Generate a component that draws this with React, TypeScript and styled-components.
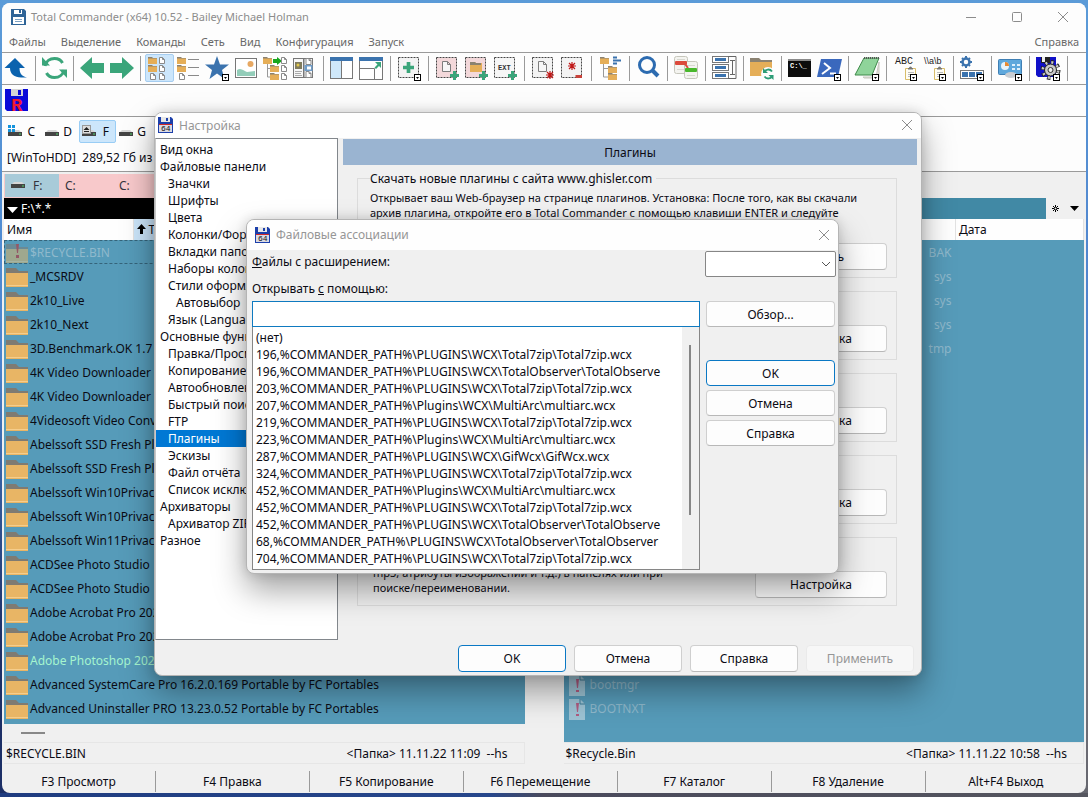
import React from "react";
import styled, { createGlobalStyle, css } from "styled-components";

const GlobalStyle = createGlobalStyle`
  * { box-sizing: border-box; }
  html, body { margin: 0; }
  body, button, input, select, table {
    font-family: "Noto Sans", "Open Sans", sans-serif;
    font-size: 12px;
    color: #0b0b14;
  }
  button { cursor: default; }
`;

/* ---------- window ---------- */

const Desktop = styled.div`
  min-height: 100vh;
  display: flex;
  padding: 3px 2px 4px;
  overflow: hidden;
  background:
    linear-gradient(90deg, #1f3c80, #27478c 45%, #4a4a5c 50%, #55565f) bottom / 100% 4px no-repeat,
    linear-gradient(180deg, #5b9bd8, #4a84cf 45%, #1c2f66 80%) left / 50% 100% no-repeat,
    linear-gradient(180deg, #5b9bd8, #4a78c8 54%, #8a8590 60%, #65666e) right / 50% 100% no-repeat;
`;

const Frame = styled.main`
  position: relative;
  flex: 1;
  min-width: 0;
  display: flex;
  flex-direction: column;
  background: #f0f0f0;
  border-radius: 8px;
`;

const TitleBar = styled.header`
  height: 27px;
  display: flex;
  align-items: center;
  padding-left: 9px;
  gap: 5px;
  background: #fdfdfd;
  border-radius: 8px 8px 0 0;
  color: #8c8c8c;
`;

const Title = styled.h1`
  flex: 1;
  margin: 0;
  font-size: 11px;
  font-weight: 400;
`;

const Caption = styled.div`
  display: flex;
`;

const CaptionButton = styled.button`
  width: 46px;
  height: 27px;
  padding: 0;
  border: 0;
  background: none;
  display: grid;
  place-items: center;
`;

const MenuBar = styled.nav`
  height: 22px;
  display: flex;
  align-items: center;
  gap: 15px;
  padding: 0 7px;
  background: #fdfdfd;
`;

const MenuItem = styled.button<{ $end?: boolean }>`
  padding: 0;
  border: 0;
  background: none;
  color: #686868;
  font-size: 11px;
  ${(p) => p.$end && css`margin-left: auto;`}
`;

const ToolBar = styled.div`
  height: 32px;
  display: flex;
  align-items: flex-start;
  padding-top: 1px;
  background: #fdfdfd;
  border-top: 1px solid #9a9a9a;
`;

const ToolButton = styled.button<{ $active?: boolean }>`
  flex: 0 0 29px;
  height: 28px;
  padding: 0;
  display: grid;
  place-items: center;
  border: 1px solid ${(p) => (p.$active ? "#a6cdf0" : "transparent")};
  border-radius: 2px;
  background: ${(p) => (p.$active ? "#cce6fb" : "none")};
  svg { overflow: visible; }
`;

const Separator = styled.span`
  flex: 0 0 1px;
  height: 25px;
  margin: 2px 4px 0;
  background: #9a9a9a;
`;

const DriveBar = styled.div`
  display: flex;
  height: 28px;
  padding: 3px 3px 0;
  background: #fdfdfd;
  border-top: 1px solid #9a9a9a;
`;

const DriveButton = styled.button<{ $active?: boolean }>`
  width: 37px;
  height: 23px;
  padding: 0 6px 0 2px;
  display: flex;
  align-items: center;
  justify-content: space-between;
  border: 1px solid ${(p) => (p.$active ? "#99cdf5" : "transparent")};
  border-radius: 2px;
  background: ${(p) => (p.$active ? "#cce6fb" : "none")};
`;

const DriveInfo = styled.div`
  height: 28px;
  padding: 0 5px;
  line-height: 27px;
  white-space: pre;
  background: #fdfdfd;
  border-bottom: 1px solid #9a9a9a;
`;

/* ---------- file panels ---------- */

const Panels = styled.div`
  flex: 1;
  min-height: 0;
  display: grid;
  grid-template-columns: minmax(0, 1fr) 39px minmax(0, 1fr);
  padding: 2px 2px 0;
`;

const Panel = styled.section`
  display: flex;
  flex-direction: column;
  min-height: 0;
`;

const TabStrip = styled.div<{ $filled?: boolean }>`
  height: 24px;
  display: flex;
  padding: 0 0 1px 1px;
  background: ${(p) => (p.$filled ? "#f8c9cb" : "none")};
`;

const Tab = styled.button<{ $active?: boolean }>`
  width: 54px;
  padding: 0 6px;
  display: flex;
  align-items: center;
  gap: 8px;
  border: 0;
  color: #33333c;
  background: ${(p) => (p.$active ? "#a8cbd9" : "#f8c9cb")};
  svg { margin-bottom: 4px; }
`;

const PathBar = styled.div<{ $active?: boolean }>`
  height: 21px;
  display: flex;
  align-items: center;
  color: #fff;
  background: ${(p) => (p.$active ? "#000" : "#4189a5")};
  > svg { margin: 3px 0 0 3px; }
`;

const PathText = styled.span`
  flex: 1;
  padding-left: 3px;
`;

const PathButton = styled.button`
  width: 19px;
  height: 21px;
  padding: 0;
  display: grid;
  place-items: center;
  border: 0;
  background: #f0f0f0;
`;

const FileArea = styled.div`
  flex: 1 1 0;
  min-height: 0;
  overflow: hidden;
  background: #569bb9;
`;

const FileTable = styled.table`
  width: 100%;
  table-layout: fixed;
  border-collapse: collapse;
  th {
    height: 21px;
    padding: 0 3px;
    text-align: left;
    font-weight: 400;
    line-height: 16px;
    background: #fefefe;
    border-right: 1px solid #e2e2e2;
  }
  td {
    height: 24px;
    padding: 0;
    white-space: nowrap;
  }
`;

const SortedHead = styled.th`
  &&& { background: #cce6fb; }
`;

const toneColors = { normal: "#0b0b14", hidden: "#8fb9cc", fresh: "#a5f5cf" };

const FileRow = styled.tr<{ $tone?: keyof typeof toneColors; $focused?: boolean }>`
  color: ${(p) => toneColors[p.$tone ?? "normal"]};
  ${(p) => p.$focused && css`outline: 1px dashed #35647a; outline-offset: -1px;`}
`;

const FileName = styled.span<{ $gap?: number }>`
  display: flex;
  align-items: center;
  gap: ${(p) => p.$gap ?? 2}px;
  height: 24px;
  padding-left: ${(p) => (p.$gap ? 5 : 2)}px;
  overflow: hidden;
  svg { margin-top: 2px; }
`;

const Extension = styled.td`
  && { text-align: right; padding-right: 4px; }
`;

const ScrollTrack = styled.div`
  height: 18px;
  padding: 8px 17px;
`;

const ScrollThumb = styled.div`
  width: 24px;
  height: 2px;
  background: #888;
`;

const StatusLine = styled.div`
  height: 22px;
  display: flex;
  justify-content: space-between;
  align-items: center;
  padding: 0 16px 0 2px;
  white-space: pre;
  border: 1px solid #e6e6e6;
  border-left: 0;
`;

const FunctionKeys = styled.div`
  display: grid;
  grid-template-columns: repeat(6, 14.2%) 1fr;
  padding: 7px 0 1px;
`;

const FunctionKey = styled.button`
  height: 21px;
  padding: 0;
  border: 0;
  border-right: 1px solid #9a9a9a;
  background: none;
  &:last-child { border-right: 0; }
`;

/* ---------- dialogs ---------- */

const Dialog = styled.section<{ $x: number; $y: number; $w: number }>`
  position: absolute;
  left: ${(p) => p.$x}px;
  top: ${(p) => p.$y}px;
  width: ${(p) => p.$w}px;
  overflow: hidden;
  border: 1px solid #b4b4b4;
  border-radius: 8px;
  background: #f0f0f0;
  box-shadow: 0 16px 32px rgba(0, 0, 0, 0.36), 0 0 12px rgba(0, 0, 0, 0.14);
`;

const DialogTitle = styled.header<{ $tall?: boolean }>`
  height: ${(p) => (p.$tall ? 30 : 25)}px;
  display: flex;
  align-items: center;
  gap: 6px;
  padding: 0 0 1px ${(p) => (p.$tall ? 8 : 3)}px;
  background: #fefefe;
  color: #969696;
  h2 {
    flex: 1;
    margin: 0;
    font-size: 12px;
    font-weight: 400;
  }
  button { width: 28px; height: 24px; }
`;

const SettingsBody = styled.div`
  display: flex;
  gap: 5px;
  padding-right: 4px;
`;

const Tree = styled.ul`
  flex: 0 0 183px;
  height: 502px;
  margin: 0;
  padding: 2px 0;
  list-style: none;
  overflow: hidden;
  background: #fff;
  border: 1px solid #82878c;
  border-left-color: #c8c8c8;
`;

const TreeItem = styled.li<{ $level: number; $selected?: boolean }>`
  height: 17px;
  line-height: 17px;
  padding-left: ${(p) => 4 + p.$level * 8}px;
  white-space: nowrap;
  color: ${(p) => (p.$selected ? "#fff" : "#0b0b14")};
  background: ${(p) => (p.$selected ? "#0078d4" : "none")};
`;

const Page = styled.div`
  flex: 1;
  min-width: 0;
`;

const PageTitle = styled.h3`
  height: 26px;
  margin: 1px 0 5px;
  font-size: 12px;
  font-weight: 400;
  line-height: 27px;
  text-align: center;
  background: #9ab4d1;
`;

const Groups = styled.div`
  display: flex;
  flex-direction: column;
  gap: 5px;
  padding: 0 20px 0 14px;
`;

const Group = styled.fieldset`
  min-width: 0;
  margin: 0;
  padding: 0 9px 7px 12px;
  border: 1px solid #dcdcdc;
  legend {
    height: 16px;
    padding: 0 4px 0 0;
    line-height: 18px;
  }
`;

const GroupBody = styled.div<{ $tall?: boolean }>`
  height: ${(p) => (p.$tall ? 84 : 53)}px;
  display: flex;
  flex-direction: ${(p) => (p.$tall ? "column" : "row")};
  align-items: flex-end;
  justify-content: space-between;
`;

const GroupText = styled.p<{ $inset?: boolean }>`
  margin: 0;
  width: ${(p) => (p.$inset ? "auto" : "100%")};
  padding: ${(p) => (p.$inset ? "0 0 3px 3px" : "4px 0 0")};
  font-size: 11px;
  line-height: 15px;
  white-space: nowrap;
`;

const PushButton = styled.button<{ $primary?: boolean; $width?: number; $height?: number }>`
  width: ${(p) => (p.$width ? `${p.$width}px` : "100%")};
  height: ${(p) => p.$height ?? 27}px;
  flex: none;
  padding: 0;
  border: 1px solid ${(p) => (p.$primary ? "#0a78c4" : "#cfcfcf")};
  border-bottom-color: ${(p) => (p.$primary ? "#0a78c4" : "#b8b8b8")};
  border-radius: 4px;
  background: #fdfdfd;
  &:disabled { color: #969696; border-color: #eaeaea; background: #f7f7f7; }
`;

const DialogButtons = styled.footer`
  display: flex;
  justify-content: flex-end;
  gap: 8px;
  padding: 5px 7px 3px;
`;

const AssocBody = styled.div`
  display: grid;
  grid-template-columns: 448px 130px;
  gap: 0 5px;
  padding: 1px 3px 3px 5px;
`;

const FieldLabel = styled.label`
  line-height: 22px;
`;

const LabelCell = styled.div`
  height: 27px;
`;

const ComboWrap = styled.div`
  position: relative;
  height: 50px;
  svg { position: absolute; right: 4px; top: 10px; pointer-events: none; }
`;

const Combo = styled.select`
  appearance: none;
  width: 131px;
  height: 26px;
  border: 1px solid #868686;
  border-radius: 2px;
  background: #fff;
`;

const PathInput = styled.input`
  display: block;
  width: 100%;
  height: 26px;
  border: 1px solid #0f7ac0;
  background: #fff;
  outline: 0;
`;

const OptionBox = styled.div`
  position: relative;
  height: 243px;
  padding-right: 17px;
  border: 1px solid #868686;
  border-top: 0;
  background: linear-gradient(90deg, #fff calc(100% - 17px), #f0f0f0 0);
`;

const Options = styled.ul`
  margin: 0;
  padding: 2px 0 0 3px;
  list-style: none;
  overflow: hidden;
  li {
    height: 17px;
    line-height: 17px;
    white-space: nowrap;
  }
`;

const OptionThumb = styled.div`
  position: absolute;
  right: 8px;
  top: 18px;
  width: 2px;
  height: 170px;
  background: #868686;
`;

const ButtonColumn = styled.div`
  display: flex;
  flex-direction: column;
  gap: 4px;
  padding-left: 1px;
  > :first-child { margin-bottom: 29px; }
`;

/* ---------- drawings ---------- */

const GREEN = "#3aa57a";
const BLUE = "#3b73ae";
const ORANGE = "#e5ae58";

const Svg = ({ children }: { children: React.ReactNode }) => (
  <svg width="24" height="24" viewBox="0 0 24 24" fill="none" aria-hidden="true">{children}</svg>
);
const Fold = ({ x, y }: { x: number; y: number }) => (
  <g transform={`translate(${x} ${y})`}>
    <path d="M0 0h4l1 1h4v2H0z" fill="#8b8272" />
    <path d="M0 1.500h9V7H0z" fill={ORANGE} />
  </g>
);
const Doc = ({ x, y }: { x: number; y: number }) => (
  <path transform={`translate(${x} ${y})`} d="M.5.5h3l2 2v4h-5zM3.500.5v2h2" stroke="#8a8a8a" fill="#fff" />
);
const BigDoc = ({ x, y }: { x: number; y: number }) => (
  <path transform={`translate(${x} ${y})`} d="M.5.5h5l3 3v7h-8zM5.500.5v3h3" stroke="#7d7d7d" fill="#f6f6f6" />
);
const Dash = ({ fill }: { fill: string }) => (
  <rect x=".5" y="1.500" width="20" height="20" fill={fill} stroke="#454545" strokeDasharray="2 1" />
);
const Plus = ({ x, y, s = 9 }: { x: number; y: number; s?: number }) => (
  <path transform={`translate(${x} ${y})`} d={`M${s / 2} 0v${s}M0 ${s / 2}h${s}`} stroke={GREEN} strokeWidth={s / 3} />
);
const Burst = ({ x, y }: { x: number; y: number }) => (
  <path transform={`translate(${x} ${y})`} d="M0-4v8M-4 0h8M-3-3l6 6M3-3l-6 6" stroke="#c01818" strokeWidth="1.200" />
);
const Drop = () => (
  <g>
    <rect x="16.500" y="18.500" width="6" height="6" fill="#fff" stroke="#000" />
    <path d="M18 21h3l-1.500 2z" fill="#000" />
  </g>
);
const Clipboard = () => (
  <g transform="translate(11 11)">
    <path d="M.5 1.500h10v11H.5z" fill="#fffdf4" stroke="#d8bd6a" />
    <path d="M3 2.500h5V1H7a1.500 1.500 0 0 0-3 0H3z" fill="#777" />
    <path d="M3 5.500h6M3 7.500h6M3 9.500h6" stroke="#bbb" />
  </g>
);

type Tool = { label: string; icon: React.ReactNode; active?: boolean } | null;

const tools: Tool[] = [
  { label: "Вверх", icon: <path d="M10 2-.5 12H5c0 6 4.500 9.500 11 9.500h6c-5-1-7.500-4-7.500-9.500H20z" fill="#0b62ae" /> },
  null,
  { label: "Обновить", icon: (
    <g transform="translate(-1 0)">
      <path d="M3 10C4 5 8 2.500 12.500 2.500c4 0 6.500 1.500 8 4.500" stroke={GREEN} strokeWidth="3" />
      <path d="M22 14c-1 5-5 7.500-9.500 7.500-4 0-6.500-1.500-8-4.500" stroke={GREEN} strokeWidth="3" />
      <path d="m0 1 8 8.500H0zM25 22l-8-8.500h8z" fill={GREEN} />
    </g>) },
  null,
  { label: "Назад", icon: <path d="M-1 12 11 1v6h12v10H11v6z" fill={GREEN} /> },
  { label: "Вперёд", icon: <path d="M24 12 12 1v6H0v10h12v6z" fill={GREEN} /> },
  null,
  { label: "Краткий", active: true, icon: <><Fold x={0} y={1} /><Doc x={11} y={1} /><Fold x={0} y={9} /><Doc x={11} y={9} /><Doc x={2} y={17} /><Doc x={11} y={17} /></> },
  { label: "Подробный", icon: <><Fold x={0} y={1} /><Fold x={0} y={9} /><Doc x={2} y={17} /><path d="M11 3.500h11M11 11.500h11M11 19.500h11" stroke="#8a8a8a" /></> },
  { label: "Избранное", icon: <><path d="m11 0 3 8.500h9l-7 5.500 2.500 9L11 17.500 3.500 23 6 14l-7-5.500h9z" fill={BLUE} /><Drop /></> },
  { label: "Эскизы", icon: (
    <>
      <rect x=".5" y="2.500" width="21" height="19" fill="#fff" stroke="#777" />
      <circle cx="15.500" cy="8" r="3" fill="#e7a862" />
      <path d="M2 14c4-3 7 1 10 2 3 0 5-1 8-1v5H2z" fill="#93cdb9" />
    </>) },
  { label: "Дерево", icon: (
    <>
      <path d="M3.500 8v13H8M3.500 12.500H8" stroke="#999" />
      <Fold x={-1} y={1} /><Fold x={6} y={9} /><Fold x={6} y={17} />
      <path d="M9 3h4V1l5 4-5 4V7H9z" fill="#17a61e" />
      <Doc x={17} y={1} /><Doc x={17} y={9} /><Doc x={17} y={17} />
    </>) },
  { label: "Быстрый просмотр", icon: (
    <>
      <rect x=".5" y="2.500" width="19" height="19" fill="#f7f7f7" stroke="#777" />
      <path d="M10 3h1.500v18H10z" fill="#777" />
      <rect x="2" y="6" width="7" height="7" fill="#807b5c" /><circle cx="5" cy="9" r="1.500" fill="#e2c84d" />
      <path d="M2 15.500h7M2 17.500h6M2 19.500h7" stroke="#aaa" />
      <rect x="11.500" y="9" width="8" height="6" fill="#6f9cc8" />
      <Doc x={12.5} y={2} /><Doc x={12.5} y={15} />
      <rect x="14" y="10.500" width="4" height="3" fill="#fff" />
    </>) },
  null,
  { label: "Вертикально", icon: (
    <>
      <rect x="-.5" y="1.500" width="22" height="21" fill="#fff" stroke="#777" />
      <path d="M0 5h10v17H0z" fill="#cfe8fa" /><path d="M-1 1h23v4H-1z" fill={BLUE} /><path d="M10.500 5v17" stroke="#777" />
    </>) },
  { label: "Окно", icon: (
    <>
      <rect x="-.5" y="1.500" width="23" height="22" fill="#fff" stroke="#777" />
      <path d="M-1 1h24v4H-1z" fill={BLUE} /><path d="M0 12.500h14.500V23" stroke="#777" />
      <path d="M15 6h6v6l-2-2-3 3-1.500-1.500 3-3z" fill={GREEN} />
    </>) },
  null,
  { label: "Выделить", icon: <><Dash fill="#f3f3f3" /><Plus x={5} y={6} s={11} /><Drop /></> },
  null,
  { label: "Выделить файлы", icon: <><Dash fill="#f3d8da" /><BigDoc x={6} y={5} /><Plus x={14} y={15} /></> },
  { label: "Выделить папки", icon: <><Dash fill="#f3d8da" /><path d="M5 6h5l1 1h6v9H5z" fill={ORANGE} /><path d="M5 6h5l1 1h5v2H5z" fill="#8b8272" /><Plus x={14} y={15} /></> },
  { label: "Выделить расширение", icon: <><Dash fill="#f6f6f6" /><text x="4" y="14" fontSize="7" fontFamily="Liberation Mono, monospace" fontWeight="700" fill="#333">EXT</text><Plus x={14} y={15} /></> },
  null,
  { label: "Снять файлы", icon: <><Dash fill="#f3f3f3" /><BigDoc x={6} y={5} /><Burst x={18} y={19} /></> },
  { label: "Снять выделение", icon: <><Dash fill="#f3f3f3" /><Burst x={11} y={10} /><path d="M14.500 19H21v3h-6.500z" fill="#c8433a" /></> },
  null,
  { label: "Дерево папок", icon: (
    <>
      <path d="M4.500 8v13H9M4.500 12.500H9" stroke="#999" />
      <Fold x={1} y={1} /><Fold x={9} y={10} /><Fold x={9} y={17} />
      <path d="M14 1.500h4M14 4.500h8M14 7.500h4" stroke={BLUE} strokeWidth="2" />
    </>) },
  null,
  { label: "Поиск", icon: <><circle cx="10" cy="9" r="7.500" stroke="#2c6bb0" strokeWidth="3" /><path d="m15 14 6 6" stroke="#2c6bb0" strokeWidth="4" /></> },
  null,
  { label: "Сравнить", icon: (
    <>
      <rect x="-.5" y=".5" width="13" height="17" rx="2" fill="#f4f4f0" stroke="#c6c6bc" />
      <rect x="9.500" y="5.500" width="13" height="17" rx="2" fill="#f4f4f0" stroke="#c6c6bc" />
      <path d="M2 3.500h8M2 13.500h7M12 9.500h8M12 19.500h8" stroke="#d8d8d0" />
      <rect x="0" y="5" width="12" height="4" rx="1" fill="#dc4a3c" /><path d="m10 8 3 4" stroke="#dc4a3c" strokeWidth="2" />
      <rect x="10" y="12" width="12" height="4" rx="1" fill="#49b82c" />
    </>) },
  null,
  { label: "Переименование", icon: (
    <>
      {[0, 8, 16].map((y) => <g key={y}><rect x="-.5" y={y + 0.5} width="16" height="6" fill="#fff" stroke="#777" /><path d={`M2 ${y + 3.5}h11`} stroke={BLUE} strokeWidth="3" /></g>)}
      <path d="M17 4.500h5M17 18.500h5M19.500 4.500v14M15 .5h8v22h-8" stroke="#666" />
    </>) },
  null,
  { label: "Синхронизация", icon: (
    <>
      <path d="M-1 2h9l2 2h11v4H-1z" fill="#8b8272" /><path d="M-1 6h22v14H-1z" fill={ORANGE} />
      <circle cx="17" cy="18" r="7" fill="#fdfdfd" />
      <path d="M13 16.500a4.500 4.500 0 0 1 8-1M21.500 19.500a4.500 4.500 0 0 1-8 1" stroke="#2c9c76" strokeWidth="1.800" />
      <path d="M12 12v5h5zM22.500 24v-5h-5z" fill="#2c9c76" />
    </>) },
  null,
  { label: "Командная строка", icon: (
    <>
      <rect x="-1" y="3" width="23" height="18" fill="#0c0c0c" /><path d="M-1 3h23v2H-1z" fill="#8a8a8a" />
      <text x="1" y="12" fontSize="7" fontFamily="Liberation Mono, monospace" fontWeight="700" fill="#fff">C:\_</text>
    </>) },
  { label: "PowerShell", icon: <><path d="M3 3h21l-4 18H-1z" fill="#3a68bd" /><path d="m6 7 6 5-8 6M12 17.500h6" stroke="#fff" strokeWidth="2" /><Drop /></> },
  null,
  { label: "Блокнот", icon: (
    <>
      <path d="M7 21h13l3-15v16H8z" fill="#e4e4dc" stroke="#c8c8c0" />
      <path d="M8 2h15l-7 17H-1z" fill="#8fd49a" stroke="#3f8a4a" /><path d="M8 2h15" stroke="#555" strokeWidth="2" strokeDasharray="1 1" /><Drop />
    </>) },
  null,
  { label: "Копировать имена", icon: <><text x="1" y="8" fontSize="10" fontFamily="Liberation Mono, monospace" fill="#222">ABC</text><Clipboard /><Drop /></> },
  { label: "Копировать пути", icon: <><text x="1" y="8" fontSize="9" fontFamily="Liberation Sans, sans-serif" fill="#222">\\a\b</text><Clipboard /><Drop /></> },
  null,
  { label: "Службы", icon: (
    <>
      <circle cx="5" cy="6" r="3.500" stroke={BLUE} strokeWidth="2.500" /><path d="M5 0v2M5 10v2M-1 6h2M9 6h2M1 2l1 1M8 9l1 1M9 2 8 3M2 9l-1 1" stroke={BLUE} strokeWidth="2" />
      <rect x="-.5" y="14.500" width="23" height="8" fill="#fff" stroke="#777" /><path d="M1 16h6v5H1zM8 16h6v5H8zM15 16h6v5h-6z" fill={BLUE} /><Drop />
    </>) },
  null,
  { label: "Панель управления", icon: (
    <>
      <rect x="-.5" y="3.500" width="23" height="15" rx="1" fill="#5fa8dc" stroke="#3f7fb4" />
      <circle cx="6" cy="10" r="4" fill="#e9f4fb" /><path d="M6 10V6a4 4 0 0 1 4 4z" fill="#e88a32" />
      <path d="M13 8h3v2h-3zM18 8h3v2h-3zM13 12h3v2h-3zM18 12h3v2h-3z" fill="#dff0fb" />
      <ellipse cx="12" cy="19" rx="6" ry="3" fill="#c9cdd2" /><Drop />
    </>) },
  null,
  { label: "Настройка", icon: (
    <>
      <path d="M-1 1h20v20H1l-2-2z" fill="#1010c8" /><path d="M4 1h9v6H4z" fill="#222" /><path d="M5 1h3v5H5z" fill="#eee" />
      <circle cx="13.500" cy="14" r="7.500" stroke="#222" strokeWidth="5" strokeDasharray="3 2.900" />
      <circle cx="13.500" cy="14" r="7.500" stroke="#c8c8c8" strokeWidth="3" strokeDasharray="2 3.900" strokeDashoffset="-.5" />
      <circle cx="13.500" cy="14" r="6" fill="#c8c8c8" stroke="#222" /><circle cx="13.500" cy="14" r="2.500" fill="#eee" stroke="#333" /><Drop />
    </>) },
  null,
];

const Floppy = ({ blue = false }: { blue?: boolean }) => (
  <svg width="15" height="16" viewBox="0 0 15 16" aria-hidden="true">
    <path d="M0 0h13l2 2v14H0z" fill={blue ? "#1c3faa" : "#2f6497"} />
    {blue ? (
      <>
        <path d="M3 0h9v5H3z" fill="#e8e8e8" /><path d="M8 1h2v3H8z" fill="#1c3faa" />
        <path d="M1 8h13v7H1z" fill="#d9d9e2" /><path d="M1 7h13v1H1z" fill="#d02828" />
        <text x="3" y="14" fontSize="8" fontFamily="Liberation Mono, monospace" fill="#111">64</text>
      </>
    ) : (
      <>
        <path d="M3 1h8v4H3zM2 8h11v7H2z" fill="#fff" /><path d="M8 1h2v3H8z" fill="#2f6497" /><path d="M4 10h7v1H4zM4 12h7v1H4z" fill="#7da2c4" />
      </>
    )}
  </svg>
);

const RegistryIcon = () => (
  <svg width="24" height="24" viewBox="0 0 24 24" aria-hidden="true">
    <path d="M0 1h23v22H2l-2-2z" fill="#0a0ad8" /><path d="M6 1h12v7H6z" fill="#d5d5d5" /><path d="M13 2h3v5h-3z" fill="#0a0ad8" />
    <text x="6" y="23" fontSize="19" fontWeight="700" fontFamily="Liberation Mono, monospace" fill="#f01830">R</text>
  </svg>
);

const DriveIcon = ({ kind }: { kind?: "system" | "usb" }) => (
  <svg width="14" height="14" viewBox="0 0 14 14" aria-hidden="true">
    <path d="M3 5h8l2 2H1z" fill="#d6d6d6" /><path d="M0 7h14v4H0z" fill="#444" /><path d="M11 8.500h2v1h-2z" fill="#4fd26a" />
    {kind === "system" && <path d="M0 0h3v3H0zM4 0h3v3H4zM0 4h3v3H0zM4 4h3v3H4z" fill="#1594dc" />}
    {kind === "usb" && <><rect x=".5" y=".5" width="8" height="8" fill="#ddd" stroke="#999" /><path d="m4.500 2 3 3h-6zM2 6h5v1H2z" fill="#222" /></>}
  </svg>
);

const FolderIcon = ({ faded }: { faded?: boolean }) => (
  <svg width="22" height="19" viewBox="0 0 22 19" aria-hidden="true">
    <g opacity={faded ? 0.5 : 1}>
      <path d="M0 0h10l3 3h9v4H0z" fill="#7f7b72" /><path d="M0 5h22v14H0z" fill="#e8b565" /><path d="M0 17h22v1H0z" fill="#f5cd8c" />
      {faded && <path d="M10 0h3l-1 9h-1zM10 11h3v3h-3z" fill="#d01818" />}
    </g>
  </svg>
);

const SystemFileIcon = () => (
  <svg width="16" height="21" viewBox="0 0 16 21" aria-hidden="true">
    <path d="M0 0h11l5 5v16H0z" fill="#9dc3d4" /><path d="M11 0v5h5" fill="none" stroke="#3f7f99" />
    <path d="M7 4h3l-1 9H8zM7 15h3v2H7z" fill="#b05c80" />
  </svg>
);

const Cross = () => (
  <svg width="12" height="12" viewBox="0 0 12 12" fill="none" stroke="#8c8c8c" aria-hidden="true"><path d="m1 1 10 10M11 1 1 11" /></svg>
);

/* ---------- data ---------- */

const menus = ["Файлы", "Выделение", "Команды", "Сеть", "Вид", "Конфигурация", "Запуск"];

const leftFiles = [
  "$RECYCLE.BIN", "_MCSRDV", "2k10_Live", "2k10_Next", "3D.Benchmark.OK 1.7", "4K Video Downloader",
  "4K Video Downloader", "4Videosoft Video Converter", "Abelssoft SSD Fresh Plus", "Abelssoft SSD Fresh Plus",
  "Abelssoft Win10PrivacyFix", "Abelssoft Win10PrivacyFix", "Abelssoft Win11PrivacyFix", "ACDSee Photo Studio",
  "ACDSee Photo Studio", "Adobe Acrobat Pro 2022", "Adobe Acrobat Pro 2022", "Adobe Photoshop 2022",
  "Advanced SystemCare Pro 16.2.0.169 Portable by FC Portables",
  "Advanced Uninstaller PRO 13.23.0.52 Portable by FC Portables",
];

const rightFiles: [string, string][] = [
  ["", "BAK"], ["", "sys"], ["", "sys"], ["", "sys"], ["", "tmp"],
  ...Array.from({ length: 13 }, (): [string, string] => ["", ""]),
  ["bootmgr", ""], ["BOOTNXT", ""],
];

const tree: [string, number][] = [
  ["Вид окна", 0], ["Файловые панели", 0], ["Значки", 1], ["Шрифты", 1], ["Цвета", 1], ["Колонки/Форматы", 1],
  ["Вкладки папок", 1], ["Наборы колонок", 1], ["Стили оформления", 1], ["Автовыбор", 2], ["Язык (Language)", 1],
  ["Основные функции", 0], ["Правка/Просмотр", 1], ["Копирование/Удаление", 1], ["Автообновление", 1],
  ["Быстрый поиск", 1], ["FTP", 1], ["Плагины", 1], ["Эскизы", 1], ["Файл отчёта", 1], ["Список исключений", 1],
  ["Архиваторы", 0], ["Архиватор ZIP", 1], ["Разное", 0],
];

const P = "%COMMANDER_PATH%\\";
const associations = [
  "(нет)",
  `196,${P}PLUGINS\\WCX\\Total7zip\\Total7zip.wcx`,
  `196,${P}PLUGINS\\WCX\\TotalObserver\\TotalObserve`,
  `203,${P}PLUGINS\\WCX\\Total7zip\\Total7zip.wcx`,
  `207,${P}Plugins\\WCX\\MultiArc\\multiarc.wcx`,
  `219,${P}PLUGINS\\WCX\\Total7zip\\Total7zip.wcx`,
  `223,${P}Plugins\\WCX\\MultiArc\\multiarc.wcx`,
  `287,${P}PLUGINS\\WCX\\GifWcx\\GifWcx.wcx`,
  `324,${P}PLUGINS\\WCX\\Total7zip\\Total7zip.wcx`,
  `452,${P}Plugins\\WCX\\MultiArc\\multiarc.wcx`,
  `452,${P}PLUGINS\\WCX\\Total7zip\\Total7zip.wcx`,
  `452,${P}PLUGINS\\WCX\\TotalObserver\\TotalObserve`,
  `68,${P}PLUGINS\\WCX\\TotalObserver\\TotalObserver`,
  `704,${P}PLUGINS\\WCX\\Total7zip\\Total7zip.wcx`,
];

const functionKeys = ["F3 Просмотр", "F4 Правка", "F5 Копирование", "F6 Перемещение", "F7 Каталог", "F8 Удаление", "Alt+F4 Выход"];

/* ---------- parts ---------- */

const LeftPanel = () => (
  <Panel>
    <TabStrip $filled>
      <Tab $active><DriveIcon />F:</Tab>
      <Tab>C:</Tab>
      <Tab>C:</Tab>
    </TabStrip>
    <PathBar $active>
      <svg width="11" height="6" viewBox="0 0 11 6" aria-hidden="true"><path d="M0 0h11L5.500 6z" fill="#fff" /></svg>
      <PathText>F:\*.*</PathText>
    </PathBar>
    <FileArea>
      <FileTable>
        <colgroup><col style={{ width: 129 }} /><col /></colgroup>
        <thead>
          <tr>
            <th>Имя</th>
            <SortedHead>
              <svg width="9" height="10" viewBox="0 0 9 10" aria-hidden="true"><path d="M4.500 0 9 5H6v5H3V5H0z" fill="#000" /></svg> Тип
            </SortedHead>
          </tr>
        </thead>
        <tbody>
          {leftFiles.map((name, i) => (
            <FileRow key={i} $tone={i === 0 ? "hidden" : i === 17 ? "fresh" : "normal"} $focused={i === 0}>
              <td colSpan={2}><FileName><FolderIcon faded={i === 0} />{name}</FileName></td>
            </FileRow>
          ))}
        </tbody>
      </FileTable>
    </FileArea>
    <ScrollTrack><ScrollThumb /></ScrollTrack>
    <StatusLine><span>$RECYCLE.BIN</span><span>{"<Папка> 11.11.22 11:09  --hs"}</span></StatusLine>
  </Panel>
);

const RightPanel = () => (
  <Panel>
    <TabStrip />
    <PathBar>
      <PathText />
      <PathButton aria-label="Избранные папки">
        <svg width="9" height="9" viewBox="-4.500 -4.500 9 9" stroke="#000" aria-hidden="true"><path d="M0-3.500v7M-3.500 0h7M-2.500-2.500l5 5M2.500-2.500l-5 5" /><circle r="1" fill="#f0f0f0" stroke="none" /></svg>
      </PathButton>
      <PathButton aria-label="История">
        <svg width="9" height="5" viewBox="0 0 9 5" aria-hidden="true"><path d="M0 0h9L4.500 5z" fill="#000" /></svg>
      </PathButton>
    </PathBar>
    <FileArea>
      <FileTable>
        <colgroup><col /><col style={{ width: 60 }} /><col style={{ width: 128 }} /></colgroup>
        <thead><tr><th /><th /><th>Дата</th></tr></thead>
        <tbody>
          {rightFiles.map(([name, ext], i) => (
            <FileRow key={i} $tone="hidden">
              <td>{name && <FileName $gap={5}><SystemFileIcon />{name}</FileName>}</td>
              <Extension>{ext}</Extension>
              <td />
            </FileRow>
          ))}
        </tbody>
      </FileTable>
    </FileArea>
    <StatusLine><span>$Recycle.Bin</span><span>{"<Папка> 11.11.22 10:58  --hs"}</span></StatusLine>
  </Panel>
);

const SettingsDialog = () => (
  <Dialog $x={152} $y={109} $w={768} role="dialog" aria-label="Настройка">
    <DialogTitle>
      <Floppy blue /><h2>Настройка</h2>
      <CaptionButton aria-label="Закрыть"><Cross /></CaptionButton>
    </DialogTitle>
    <SettingsBody>
      <Tree>
        {tree.map(([name, level], i) => (
          <TreeItem key={i} $level={level} $selected={name === "Плагины"}>{name}</TreeItem>
        ))}
      </Tree>
      <Page>
        <PageTitle>Плагины</PageTitle>
        <Groups>
          <Group>
            <legend>Скачать новые плагины с сайта www.ghisler.com</legend>
            <GroupBody $tall>
              <GroupText>
                Открывает ваш Web-браузер на странице плагинов. Установка: После того, как вы скачали<br />
                архив плагина, откройте его в Total Commander с помощью клавиши ENTER и следуйте
              </GroupText>
              <PushButton $width={132}>Скачать</PushButton>
            </GroupBody>
          </Group>
          {["WCX", "WFX", "WLX"].map((kind) => (
            <Group key={kind}>
              <legend>Плагины {kind}</legend>
              <GroupBody>
                <span />
                <PushButton $width={132}>Настройка</PushButton>
              </GroupBody>
            </Group>
          ))}
          <Group>
            <legend>Плагины WDX</legend>
            <GroupBody>
              <GroupText $inset>
                mp3, атрибуты изображений и т.д.) в панелях или при<br />
                поиске/переименовании.
              </GroupText>
              <PushButton $width={132}>Настройка</PushButton>
            </GroupBody>
          </Group>
        </Groups>
      </Page>
    </SettingsBody>
    <DialogButtons>
      <PushButton $primary $width={108}>OK</PushButton>
      <PushButton $width={108}>Отмена</PushButton>
      <PushButton $width={108}>Справка</PushButton>
      <PushButton $width={108} disabled>Применить</PushButton>
    </DialogButtons>
  </Dialog>
);

const AssociationsDialog = () => (
  <Dialog $x={244} $y={216} $w={593} role="dialog" aria-label="Файловые ассоциации">
    <DialogTitle $tall>
      <Floppy blue /><h2>Файловые ассоциации</h2>
      <CaptionButton aria-label="Закрыть"><Cross /></CaptionButton>
    </DialogTitle>
    <AssocBody>
      <div>
        <LabelCell><FieldLabel htmlFor="ext"><u>Ф</u>айлы с расширением:</FieldLabel></LabelCell>
        <FieldLabel htmlFor="opener">Открывать <u>с</u> помощью:</FieldLabel>
      </div>
      <ComboWrap>
        <Combo id="ext" />
        <svg width="10" height="6" viewBox="0 0 10 6" fill="none" stroke="#555"><path d="m1 1 4 4 4-4" /></svg>
      </ComboWrap>
      <div>
        <PathInput id="opener" />
        <OptionBox>
          <Options>{associations.map((a, i) => <li key={i}>{a}</li>)}</Options>
          <OptionThumb />
        </OptionBox>
      </div>
      <ButtonColumn>
        <PushButton $height={26}>Обзор...</PushButton>
        <PushButton $height={26} $primary>OK</PushButton>
        <PushButton $height={26}>Отмена</PushButton>
        <PushButton $height={26}>Справка</PushButton>
      </ButtonColumn>
    </AssocBody>
  </Dialog>
);

export default function App() {
  return (
    <Desktop>
      <GlobalStyle />
      <Frame>
        <TitleBar>
          <Floppy />
          <Title>Total Commander (x64) 10.52 - Bailey Michael Holman</Title>
          <Caption>
            <CaptionButton aria-label="Свернуть"><svg width="10" height="10" stroke="#8c8c8c"><path d="M0 5.500h10" /></svg></CaptionButton>
            <CaptionButton aria-label="Развернуть"><svg width="10" height="10" fill="none" stroke="#8c8c8c"><rect x=".5" y=".5" width="9" height="9" rx="1" /></svg></CaptionButton>
            <CaptionButton aria-label="Закрыть"><Cross /></CaptionButton>
          </Caption>
        </TitleBar>
        <MenuBar>
          {menus.map((m) => <MenuItem key={m}>{m}</MenuItem>)}
          <MenuItem $end>Справка</MenuItem>
        </MenuBar>
        <ToolBar role="toolbar">
          {tools.map((t, i) => t
            ? <ToolButton key={i} $active={t.active} aria-label={t.label}><Svg>{t.icon}</Svg></ToolButton>
            : <Separator key={i} />)}
        </ToolBar>
        <ToolBar role="toolbar">
          <ToolButton aria-label="Реестр"><RegistryIcon /></ToolButton>
        </ToolBar>
        <DriveBar>
          <DriveButton><DriveIcon kind="system" />C</DriveButton>
          <DriveButton><DriveIcon />D</DriveButton>
          <DriveButton $active><DriveIcon kind="usb" />F</DriveButton>
          <DriveButton><DriveIcon />G</DriveButton>
        </DriveBar>
        <DriveInfo>{"[WinToHDD]  289,52 Гб из"}</DriveInfo>
        <Panels>
          <LeftPanel />
          <span />
          <RightPanel />
        </Panels>
        <FunctionKeys>
          {functionKeys.map((k) => <FunctionKey key={k}>{k}</FunctionKey>)}
        </FunctionKeys>
        <SettingsDialog />
        <AssociationsDialog />
      </Frame>
    </Desktop>
  );
}
